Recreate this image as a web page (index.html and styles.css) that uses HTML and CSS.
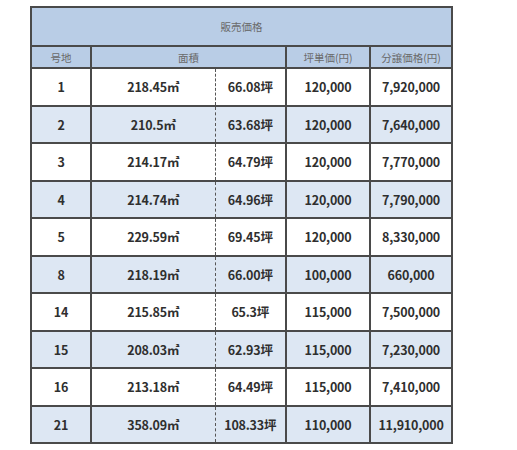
FILE: index.html
```html
<!DOCTYPE html>
<html lang="ja">
<head>
<meta charset="utf-8">
<link rel="stylesheet" href="styles.css">
</head>
<body>
<div class="wrap">
<table class="price">
  <colgroup>
    <col class="c1"><col class="c2"><col class="c3"><col class="c4"><col class="c5">
  </colgroup>
  <thead>
    <tr class="h1"><th colspan="5">販売価格</th></tr>
    <tr class="h2"><th>号地</th><th colspan="2">面積</th><th>坪単価(円)</th><th>分譲価格(円)</th></tr>
  </thead>
  <tbody>
    <tr><td>1</td><td class="m2">218.45㎡</td><td class="tsubo">66.08坪</td><td>120,000</td><td>7,920,000</td></tr>
    <tr class="alt"><td>2</td><td class="m2">210.5㎡</td><td class="tsubo">63.68坪</td><td>120,000</td><td>7,640,000</td></tr>
    <tr><td>3</td><td class="m2">214.17㎡</td><td class="tsubo">64.79坪</td><td>120,000</td><td>7,770,000</td></tr>
    <tr class="alt"><td>4</td><td class="m2">214.74㎡</td><td class="tsubo">64.96坪</td><td>120,000</td><td>7,790,000</td></tr>
    <tr><td>5</td><td class="m2">229.59㎡</td><td class="tsubo">69.45坪</td><td>120,000</td><td>8,330,000</td></tr>
    <tr class="alt"><td>8</td><td class="m2">218.19㎡</td><td class="tsubo">66.00坪</td><td>100,000</td><td>660,000</td></tr>
    <tr><td>14</td><td class="m2">215.85㎡</td><td class="tsubo">65.3坪</td><td>115,000</td><td>7,500,000</td></tr>
    <tr class="alt"><td>15</td><td class="m2">208.03㎡</td><td class="tsubo">62.93坪</td><td>115,000</td><td>7,230,000</td></tr>
    <tr><td>16</td><td class="m2">213.18㎡</td><td class="tsubo">64.49坪</td><td>115,000</td><td>7,410,000</td></tr>
    <tr class="alt"><td>21</td><td class="m2">358.09㎡</td><td class="tsubo">108.33坪</td><td>110,000</td><td>11,910,000</td></tr>
  </tbody>
</table>
</div>
</body>
</html>
```
FILE: styles.css
```css
html, body {
  margin: 0;
  padding: 0;
  background: #ffffff;
}
.wrap {
  padding: 6px 0 0 30px;
}
.price {
  border-collapse: collapse;
  table-layout: fixed;
  width: 421px;
  border: 2px solid #2a2a2a;
  font-family: "Noto Sans CJK JP", "Noto Sans", sans-serif;
  color: #333;
}
.c1 { width: 60px; }
.c2 { width: 124px; }
.c3 { width: 71px; }
.c4 { width: 84px; }
.c5 { width: 82px; }
.price th, .price td {
  border: 2px solid #4a4a4a;
  text-align: center;
  padding: 0;
}
.price th {
  background: #b9cde6;
  font-weight: 400;
  font-size: 10.5px;
  color: #6a6a6a;
}
.h1 th {
  height: 37px;
}
.h2 th {
  height: 20px;
}
.price td {
  height: 35.5px;
  font-weight: 700;
  font-size: 12.5px;
  color: #2f2f2f;
  letter-spacing: -0.2px;
}
.price td.m2 {
  border-right: 1px dashed #555;
}
.price td.tsubo {
  border-left: 1px dashed #555;
}
.alt td {
  background: #dde7f3;
}
```
